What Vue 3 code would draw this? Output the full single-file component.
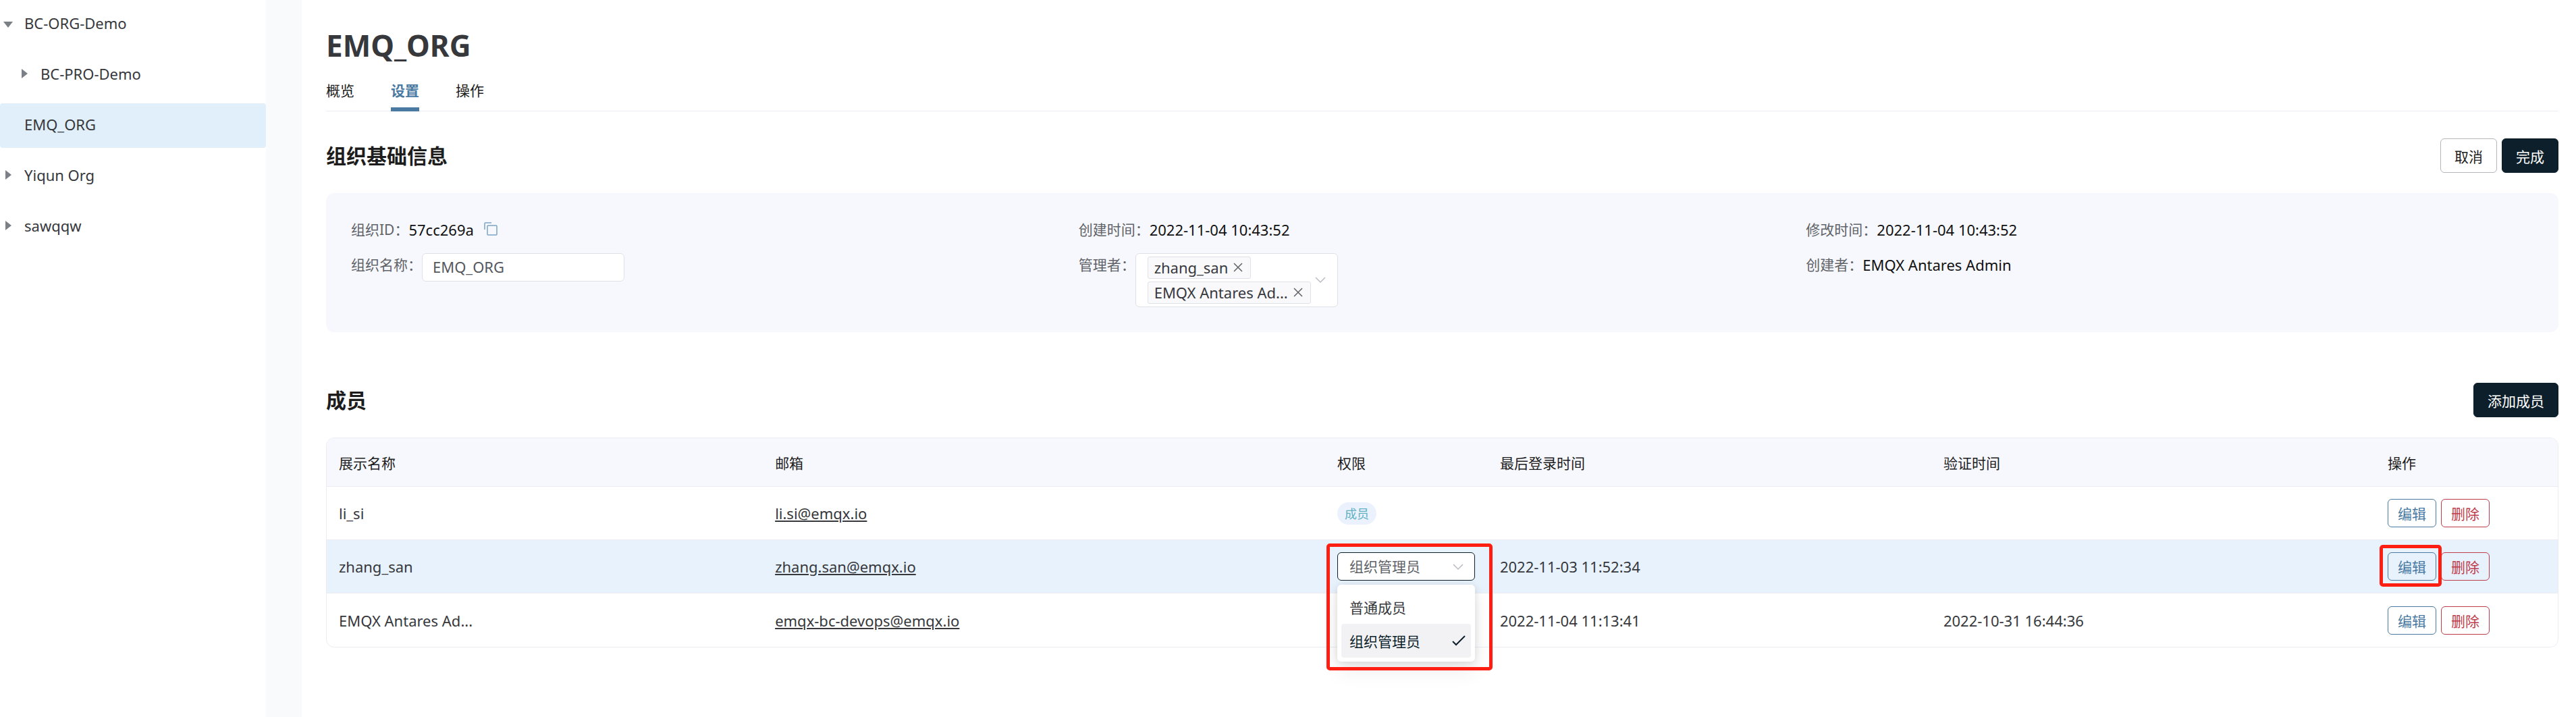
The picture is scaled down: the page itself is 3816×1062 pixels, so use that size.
<script setup>
import { ref } from 'vue'

const orgs = [
  { name: 'BC-ORG-Demo', caret: 'down', level: 0 },
  { name: 'BC-PRO-Demo', caret: 'right', level: 1 },
  { name: 'EMQ_ORG', caret: '', level: 0, active: true },
  { name: 'Yiqun Org', caret: 'right', level: 0 },
  { name: 'sawqqw', caret: 'right', level: 0 },
]

const tabs = ['概览', '设置', '操作']
const activeTab = ref('设置')

const orgName = ref('EMQ_ORG')
const managers = ref(['zhang_san', 'EMQX Antares Ad...'])

const roles = ['普通成员', '组织管理员']
const role = ref('组织管理员')

const members = [
  { name: 'li_si', email: 'li.si@emqx.io', tag: '成员', login: '', verified: '' },
  { name: 'zhang_san', email: 'zhang.san@emqx.io', editing: true, login: '2022-11-03 11:52:34', verified: '' },
  { name: 'EMQX Antares Ad...', email: 'emqx-bc-devops@emqx.io', login: '2022-11-04 11:13:41', verified: '2022-10-31 16:44:36' },
]

function removeManager(name) {
  managers.value = managers.value.filter((m) => m !== name)
}
</script>

<template>
  <div class="layout">
    <aside class="sidebar">
      <ul class="tree">
        <li
          v-for="org in orgs"
          :key="org.name"
          class="node"
          :class="{ nested: org.level, active: org.active }"
        >
          <span class="caret" :class="org.caret"></span>
          <span>{{ org.name }}</span>
        </li>
      </ul>
    </aside>

    <main class="content">
      <h1>EMQ_ORG</h1>
      <nav class="tabs">
        <a
          v-for="tab in tabs"
          :key="tab"
          href="#"
          class="tab"
          :class="{ current: tab === activeTab }"
          @click.prevent="activeTab = tab"
        >{{ tab }}</a>
      </nav>

      <div class="section-head">
        <h2>组织基础信息</h2>
        <div class="actions">
          <button type="button" class="btn">取消</button>
          <button type="button" class="btn primary">完成</button>
        </div>
      </div>

      <section class="panel">
        <div class="column">
          <div class="field">
            <span class="label">组织ID：</span>
            <span class="value">57cc269a</span>
            <button type="button" class="copy" aria-label="复制">
              <svg viewBox="0 0 20 20" width="20" height="20" fill="none" stroke="#7ba3c4" stroke-width="1.5">
                <rect x="5" y="5" width="14" height="14" rx="1" />
                <path d="M1 11V2Q1 1 2 1H11" />
              </svg>
            </button>
          </div>
          <div class="field">
            <label class="label" for="org-name">组织名称：</label>
            <input id="org-name" v-model="orgName" type="text" class="input" />
          </div>
        </div>
        <div class="column">
          <div class="field">
            <span class="label">创建时间：</span>
            <span class="value">2022-11-04 10:43:52</span>
          </div>
          <div class="field">
            <span id="managers-label" class="label">管理者：</span>
            <div class="multi" role="group" aria-labelledby="managers-label">
              <div class="chips">
                <span v-for="m in managers" :key="m" class="chip">
                  {{ m }}
                  <button type="button" class="remove" :aria-label="'移除 ' + m" @click="removeManager(m)">
                    <svg viewBox="0 0 14 14" width="14" height="14" stroke="#606266" stroke-width="1.5">
                      <path d="M1 1L13 13M13 1L1 13" />
                    </svg>
                  </button>
                </span>
              </div>
              <svg viewBox="0 0 16 10" width="16" height="10" fill="none" stroke="#b9bcc4" stroke-width="1.5">
                <path d="M1 1L8 8L15 1" />
              </svg>
            </div>
          </div>
        </div>
        <div class="column">
          <div class="field">
            <span class="label">修改时间：</span>
            <span class="value">2022-11-04 10:43:52</span>
          </div>
          <div class="field">
            <span class="label">创建者：</span>
            <span class="value">EMQX Antares Admin</span>
          </div>
        </div>
      </section>

      <div class="section-head members-head">
        <h2>成员</h2>
        <button type="button" class="btn primary">添加成员</button>
      </div>

      <table class="table">
        <colgroup>
          <col class="c-name" />
          <col class="c-email" />
          <col class="c-role" />
          <col class="c-login" />
          <col class="c-verified" />
          <col class="c-actions" />
        </colgroup>
        <thead>
          <tr>
            <th>展示名称</th>
            <th>邮箱</th>
            <th>权限</th>
            <th>最后登录时间</th>
            <th>验证时间</th>
            <th>操作</th>
          </tr>
        </thead>
        <tbody>
          <tr v-for="m in members" :key="m.name" :class="{ editing: m.editing }">
            <td>{{ m.name }}</td>
            <td><a :href="'mailto:' + m.email">{{ m.email }}</a></td>
            <td>
              <span v-if="m.tag" class="tag">{{ m.tag }}</span>
              <div v-if="m.editing" class="role">
                <select v-model="role" class="role-select" aria-label="权限">
                  <option v-for="r in roles" :key="r">{{ r }}</option>
                </select>
                <svg class="role-arrow" viewBox="0 0 16 10" width="16" height="10" fill="none" stroke="#b9bcc4" stroke-width="1.5">
                  <path d="M1 1L8 8L15 1" />
                </svg>
                <ul class="menu" role="listbox" aria-label="权限">
                  <li
                    v-for="r in roles"
                    :key="r"
                    role="option"
                    :aria-selected="r === role"
                    class="option"
                    :class="{ selected: r === role }"
                    @click="role = r"
                  >
                    {{ r }}
                    <svg v-if="r === role" viewBox="0 0 20 16" width="20" height="16" fill="none" stroke="#0d1f2b" stroke-width="2">
                      <path d="M1 9L6 14L19 1" />
                    </svg>
                  </li>
                </ul>
                <span class="frame role-frame"></span>
              </div>
            </td>
            <td>{{ m.login }}</td>
            <td>{{ m.verified }}</td>
            <td>
              <div class="row-actions">
                <span class="edit-wrap">
                  <button type="button" class="btn-small edit">编辑</button>
                  <span v-if="m.editing" class="frame edit-frame"></span>
                </span>
                <button type="button" class="btn-small delete">删除</button>
              </div>
            </td>
          </tr>
        </tbody>
      </table>
    </main>
  </div>
</template>

<style>
body {
  margin: 0;
  background: #fff;
}
</style>

<style scoped>
.layout {
  display: flex;
  min-height: 100vh;
  font-family: "Noto Sans", "Noto Sans CJK SC", sans-serif;
  font-size: 22px;
  color: #36383c;
  background: #f9fafc;
}

.layout * {
  box-sizing: border-box;
}

button,
input,
select {
  margin: 0;
  font-family: inherit;
}

.sidebar {
  flex: 0 0 394px;
  margin-right: 53px;
  background: #fff;
}

.tree {
  display: flex;
  flex-direction: column;
  gap: 9px;
  margin: 0;
  padding: 3px 0 0;
  list-style: none;
}

.node {
  display: flex;
  align-items: center;
  height: 66px;
  padding-bottom: 4px;
  border-radius: 4px;
}

.node.nested {
  padding-left: 24px;
}

.node.active {
  background: #e1effa;
}

.caret {
  display: flex;
  flex: 0 0 36px;
}

.caret::before {
  content: "";
  border: 0 solid transparent;
}

.caret.down::before {
  margin: 4px 5px 0;
  border-width: 9px 7px 0;
  border-top-color: #7b7f86;
}

.caret.right::before {
  margin: 0 8px;
  border-width: 7px 0 7px 9px;
  border-left-color: #7b7f86;
}

.content {
  flex: 1;
  min-width: 0;
  padding: 40px 26px 40px 36px;
  background: #fff;
}

h1 {
  margin: 0 0 24px;
  font-size: 44px;
  line-height: 54px;
  font-weight: 700;
}

.tabs {
  display: flex;
  gap: 54px;
  border-bottom: 1px solid #ebedf3;
}

.tab {
  margin-bottom: -1px;
  padding-bottom: 9px;
  border-bottom: 6px solid transparent;
  font-size: 21px;
  line-height: 32px;
  color: #1d1d1d;
  text-decoration: none;
}

.tab.current {
  border-bottom-color: #4a7aa1;
  font-weight: 700;
  color: #4a7aa1;
}

.section-head {
  display: flex;
  align-items: center;
  justify-content: space-between;
  margin-top: 40px;
}

.section-head.members-head {
  margin-top: 75px;
}

h2 {
  margin: 0;
  font-size: 30px;
  line-height: 44px;
  font-weight: 700;
  color: #1d1d1d;
}

.actions {
  display: flex;
  gap: 7px;
}

.btn {
  height: 51px;
  padding: 0 20px;
  border: 1px solid #b4b6ba;
  border-radius: 6px;
  font-size: 21px;
  color: #1d1d1d;
  background: #fff;
}

.btn.primary {
  border-color: #0d1f2b;
  color: #fff;
  background: #0d1f2b;
}

.panel {
  display: grid;
  grid-template-columns: repeat(3, 1fr);
  margin-top: 30px;
  padding: 37px;
  border-radius: 12px;
  line-height: 34px;
  background: #f7f8fd;
}

.column {
  display: flex;
  flex-direction: column;
  gap: 18px;
}

.field {
  display: flex;
  align-items: flex-start;
}

.label {
  font-size: 21px;
  color: #606368;
}

.value {
  color: #111;
}

.copy {
  display: flex;
  margin: 6px 0 0 15px;
  padding: 0;
  border: 0;
  background: none;
}

.input {
  width: 300px;
  height: 42px;
  padding: 0 15px 3px;
  border: 1px solid #dfe1e8;
  border-radius: 6px;
  font-size: 22px;
  color: #55585e;
  background: #fff;
}

.multi {
  display: flex;
  align-items: center;
  justify-content: space-between;
  width: 300px;
  padding: 4px 17px;
  border: 1px solid #dfe1e8;
  border-radius: 6px;
  background: #fff;
}

.chips {
  display: flex;
  flex-direction: column;
  align-items: flex-start;
  gap: 4px;
}

.chip {
  display: flex;
  align-items: center;
  gap: 8px;
  height: 33px;
  padding: 0 11px 2px 9px;
  border: 1px solid #dfe1e8;
  border-radius: 3px;
  background: #f9f9fc;
}

.remove {
  display: flex;
  padding: 0;
  border: 0;
  background: none;
}

.table {
  width: 100%;
  margin-top: 30px;
  border: 1px solid #ebedf3;
  border-radius: 12px;
  border-spacing: 0;
  table-layout: fixed;
}

.c-name { width: 19.55%; }
.c-email { width: 25.2%; }
.c-role { width: 7.29%; }
.c-login { width: 19.88%; }
.c-verified { width: 19.91%; }
.c-actions { width: 8.17%; }

th,
td {
  padding: 0 18px;
  border-bottom: 1px solid #ebedf3;
  text-align: left;
}

th {
  height: 72px;
  font-size: 21px;
  font-weight: 400;
  color: #1d1d1d;
  background: #f7f8fd;
}

th:first-child {
  border-top-left-radius: 11px;
}

th:last-child {
  border-top-right-radius: 11px;
}

td {
  height: 79px;
}

tr:last-child td {
  border-bottom: 0;
}

tr.editing td {
  background: #e7f2fc;
}

td a {
  color: #36383c;
}

.tag {
  display: inline-flex;
  align-items: center;
  height: 33px;
  padding: 0 11px;
  border-radius: 17px;
  font-size: 18px;
  color: #5fb0c0;
  background: #ebf2fe;
}

.role {
  position: relative;
  width: 204px;
  font-size: 21px;
}

.role-select {
  display: block;
  width: 100%;
  height: 42px;
  padding: 0 17px;
  border: 1px solid #0d1f2b;
  border-radius: 6px;
  font-size: 21px;
  color: #606368;
  background: #fff;
  appearance: none;
}

.role-arrow {
  position: absolute;
  top: 17px;
  right: 17px;
}

.menu {
  position: absolute;
  top: 48px;
  left: 0;
  z-index: 1;
  width: 100%;
  margin: 0;
  padding: 8px 6px 6px;
  border-radius: 6px;
  list-style: none;
  background: #fff;
  box-shadow: 0 12px 32px rgba(0, 0, 0, 0.08), 0 2px 12px rgba(0, 0, 0, 0.12);
}

.option {
  display: flex;
  align-items: center;
  justify-content: space-between;
  height: 50px;
  padding: 0 8px 0 12px;
  border-radius: 4px;
}

.option.selected {
  color: #0d1f2b;
  background: #f2f2f5;
}

.frame {
  position: absolute;
  z-index: 2;
  border: 5px solid #ff1f12;
  border-radius: 5px;
  pointer-events: none;
}

.role-frame {
  inset: -13px -26px -133px -16px;
}

.edit-frame {
  inset: -11px -8px -9px -12px;
}

.row-actions {
  display: flex;
  gap: 7px;
}

.edit-wrap {
  position: relative;
  display: flex;
}

.btn-small {
  height: 42px;
  padding: 0 14px;
  border: 1px solid;
  border-radius: 6px;
  font-size: 21px;
  background: none;
}

.btn-small.edit {
  color: #4a7aa1;
}

.btn-small.delete {
  color: #bf3c4b;
}
</style>
